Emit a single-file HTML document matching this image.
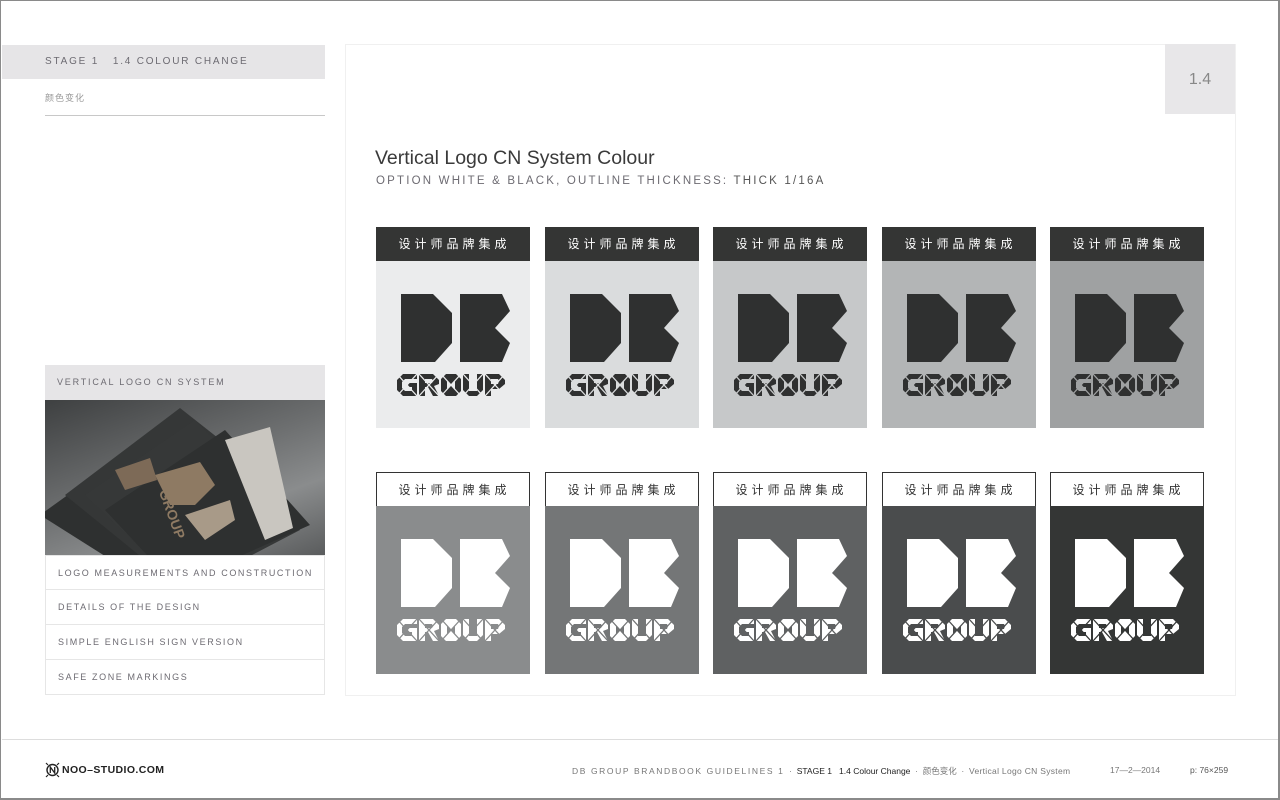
<!DOCTYPE html>
<html><head><meta charset="utf-8"><style>
*{margin:0;padding:0;box-sizing:border-box}
body{width:1280px;height:800px;background:#fff;position:relative;overflow:hidden;font-family:"Liberation Sans","Noto Sans CJK SC",sans-serif}
.a{position:absolute}
.frame{left:0;top:0;width:1280px;height:800px;border:1px solid #8a8a8a;border-right:2px solid #8a8a8a;border-bottom:2px solid #8a8a8a}
.lbl{font-size:10px;letter-spacing:1.8px;color:#6d6b72}
.card{position:absolute;width:154px}
.hd{height:34px;font-size:12px;letter-spacing:4px;text-align:center;line-height:33px;font-family:"Noto Sans CJK SC",sans-serif;padding-left:3px}
.r1 .hd{background:#343534;color:#fff}
.r2 .hd{background:#fff;color:#333;border:1px solid #333;border-bottom:none}
.bd{height:167px;position:relative}
.r2 .bd{height:168px}
.bd svg{position:absolute;left:0;top:0}
.nav{left:45px;width:280px;height:35px;border:1px solid #e6e6e6;border-top:none;padding-left:12px;line-height:34px;font-size:9px;letter-spacing:1.6px;color:#6d6b72}
</style></head><body>
<svg width="0" height="0" style="position:absolute"><defs>
<g id="logo">
<polygon points="25,33 57,33 76,52 76,82 59,101 25,101"/>
<polygon points="84,33 126,33 134,50 119,67 134,82 126,101 84,101"/>
<g transform="translate(21,113)"><polygon points="0,6 6,0 20,0 20,5 8,5 5,8 5,14 8,17 15,17 15,13 11,13 11,9 20,9 20,22 6,22 0,16"/></g>
<g transform="translate(43,113)"><path fill-rule="evenodd" d="M0 0H14L20 6V10L15 12L20 22H14L9 13H6V22H0Z M6 5H13L14 7L13 9H6Z"/></g>
<g transform="translate(65,113)"><path fill-rule="evenodd" d="M5 0H15L20 5V17L15 22H5L0 17V5Z M6 6H14V16H6Z"/><polygon points="6,6 14,6 10,11"/><polygon points="6,16 14,16 10,11"/></g>
<g transform="translate(87,113)"><polygon points="0,0 6,0 6,17 14,17 14,0 20,0 20,16 14,22 6,22 0,16"/></g>
<g transform="translate(109,113)"><path fill-rule="evenodd" d="M0 0H14L20 6V10L14 15H6V22H0Z M6 5H13L14 7L13 10H6Z"/></g>
<g fill="none" stroke="currentColor" stroke-width="1.3">
<path d="M21 113L41 135M41 113L21 135"/>
<path d="M43 113L63 135M63 113L43 135"/>
<path d="M65 113L85 135M85 113L65 135"/>
<path d="M87 113L107 135M107 113L87 135"/>
<path d="M109 113L129 135M129 113L109 135"/>
</g>
</g></defs></svg>

<div class="a frame"></div>

<div class="a" style="left:2px;top:45px;width:323px;height:34px;background:#e6e5e7"></div>
<div class="a lbl" style="left:45px;top:56px">STAGE 1&nbsp;&nbsp;&nbsp;1.4 COLOUR CHANGE</div>
<div class="a" style="left:45px;top:91px;font-size:9px;color:#999;letter-spacing:1px;font-family:'Noto Sans CJK SC',sans-serif">颜色变化</div>
<div class="a" style="left:45px;top:115px;width:280px;height:1px;background:#c8c8c8"></div>

<div class="a" style="left:45px;top:365px;width:280px;height:35px;background:#e6e5e7"></div>
<div class="a lbl" style="left:57px;top:377px;font-size:9px">VERTICAL LOGO CN SYSTEM</div>
<div class="a" style="left:45px;top:400px;width:280px;height:155px;overflow:hidden;background:linear-gradient(160deg,#3e4041 0%,#6d6f70 45%,#8a8c8d 70%,#5a5c5d 100%)">
<svg width="280" height="155">
<polygon points="-5,115 120,25 215,95 90,175" fill="#2e3030"/>
<polygon points="20,95 135,8 220,75 100,160" fill="#353737"/>
<polygon points="40,95 150,20 255,130 140,190" fill="#363838"/>
<polygon points="60,110 180,30 265,125 130,185" fill="#2e3030"/>
<polygon points="180,40 225,27 248,128 220,140" fill="#c9c6c0"/>
<polygon points="110,75 155,62 170,85 150,105 125,105" fill="#8e7a63"/>
<polygon points="140,115 185,100 190,120 160,140" fill="#a89a88"/>
<polygon points="70,70 105,58 112,80 80,90" fill="#7d6a57"/>
<text x="110" y="103" fill="#8e7a63" font-size="14" font-weight="bold" transform="rotate(70 120 100)">GROUP</text>
</svg></div>
<div class="a nav" style="top:555px;border-top:1px solid #e6e6e6">LOGO MEASUREMENTS AND CONSTRUCTION</div>
<div class="a nav" style="top:590px">DETAILS OF THE DESIGN</div>
<div class="a nav" style="top:625px">SIMPLE ENGLISH SIGN VERSION</div>
<div class="a nav" style="top:660px">SAFE ZONE MARKINGS</div>

<div class="a" style="left:345px;top:44px;width:891px;height:652px;border:1px solid #f0f0f0"></div>
<div class="a" style="left:1165px;top:44px;width:70px;height:70px;background:#e8e7e9;color:#888;font-size:16px;text-align:center;line-height:72px">1.4</div>
<div class="a" style="left:375px;top:147px;font-size:19.5px;color:#3a3a3a">Vertical Logo CN System Colour</div>
<div class="a" style="left:376px;top:175px;font-size:11.5px;letter-spacing:2.2px;color:#6d6b72">OPTION WHITE &amp; BLACK, OUTLINE THICKNESS: <span style="color:#555">THICK 1/16A</span></div>

<div class="card r1" style="left:376px;top:227px"><div class="hd">设计师品牌集成</div><div class="bd" style="background:#ebeced"><svg width="154" height="167" fill="#2f3030" style="color:#ebeced"><use href="#logo"/></svg></div></div>
<div class="card r1" style="left:545px;top:227px"><div class="hd">设计师品牌集成</div><div class="bd" style="background:#dadcdd"><svg width="154" height="167" fill="#2f3030" style="color:#dadcdd"><use href="#logo"/></svg></div></div>
<div class="card r1" style="left:713px;top:227px"><div class="hd">设计师品牌集成</div><div class="bd" style="background:#c6c8c9"><svg width="154" height="167" fill="#2f3030" style="color:#c6c8c9"><use href="#logo"/></svg></div></div>
<div class="card r1" style="left:882px;top:227px"><div class="hd">设计师品牌集成</div><div class="bd" style="background:#b3b5b6"><svg width="154" height="167" fill="#2f3030" style="color:#b3b5b6"><use href="#logo"/></svg></div></div>
<div class="card r1" style="left:1050px;top:227px"><div class="hd">设计师品牌集成</div><div class="bd" style="background:#9fa1a2"><svg width="154" height="167" fill="#2f3030" style="color:#9fa1a2"><use href="#logo"/></svg></div></div>

<div class="card r2" style="left:376px;top:472px"><div class="hd">设计师品牌集成</div><div class="bd" style="background:#8a8c8d"><svg width="154" height="167" fill="#fff" style="color:#8a8c8d"><use href="#logo"/></svg></div></div>
<div class="card r2" style="left:545px;top:472px"><div class="hd">设计师品牌集成</div><div class="bd" style="background:#747677"><svg width="154" height="167" fill="#fff" style="color:#747677"><use href="#logo"/></svg></div></div>
<div class="card r2" style="left:713px;top:472px"><div class="hd">设计师品牌集成</div><div class="bd" style="background:#5f6162"><svg width="154" height="167" fill="#fff" style="color:#5f6162"><use href="#logo"/></svg></div></div>
<div class="card r2" style="left:882px;top:472px"><div class="hd">设计师品牌集成</div><div class="bd" style="background:#4a4c4d"><svg width="154" height="167" fill="#fff" style="color:#4a4c4d"><use href="#logo"/></svg></div></div>
<div class="card r2" style="left:1050px;top:472px"><div class="hd">设计师品牌集成</div><div class="bd" style="background:#343635"><svg width="154" height="167" fill="#fff" style="color:#343635"><use href="#logo"/></svg></div></div>

<div class="a" style="left:2px;top:739px;width:1276px;height:1px;background:#ddd"></div>
<svg class="a" style="left:45px;top:762px" width="15" height="16" viewBox="0 0 15 16"><circle cx="7.5" cy="8" r="5.5" fill="none" stroke="#222" stroke-width="1.4"/><path d="M5.3 11V5L9.7 11V5" fill="none" stroke="#222" stroke-width="1.3"/><path d="M1 1L3 3M14 1L12 3M1 15L3 13M14 15L12 13" stroke="#222" stroke-width="1.2"/></svg>
<div class="a" style="left:62px;top:764px;font-size:10.5px;font-weight:bold;color:#222;letter-spacing:0.4px">NOO–STUDIO.COM</div>
<div class="a" style="left:572px;top:765px;font-size:8.5px;color:#777;white-space:nowrap"><span style="letter-spacing:1.6px">DB GROUP BRANDBOOK GUIDELINES 1</span>&nbsp;&nbsp;·&nbsp;&nbsp;<span style="color:#222">STAGE 1&nbsp;&nbsp;&nbsp;1.4 Colour Change</span>&nbsp;&nbsp;·&nbsp;&nbsp;<span style="font-family:'Noto Sans CJK SC',sans-serif">颜色变化</span>&nbsp;&nbsp;·&nbsp;&nbsp;<span style="letter-spacing:0.3px">Vertical Logo CN System</span></div>
<div class="a" style="left:1110px;top:765px;font-size:8.5px;color:#777">17—2—2014</div>
<div class="a" style="left:1190px;top:765px;font-size:8.5px;color:#555">p: 76×259</div>
</body></html>
